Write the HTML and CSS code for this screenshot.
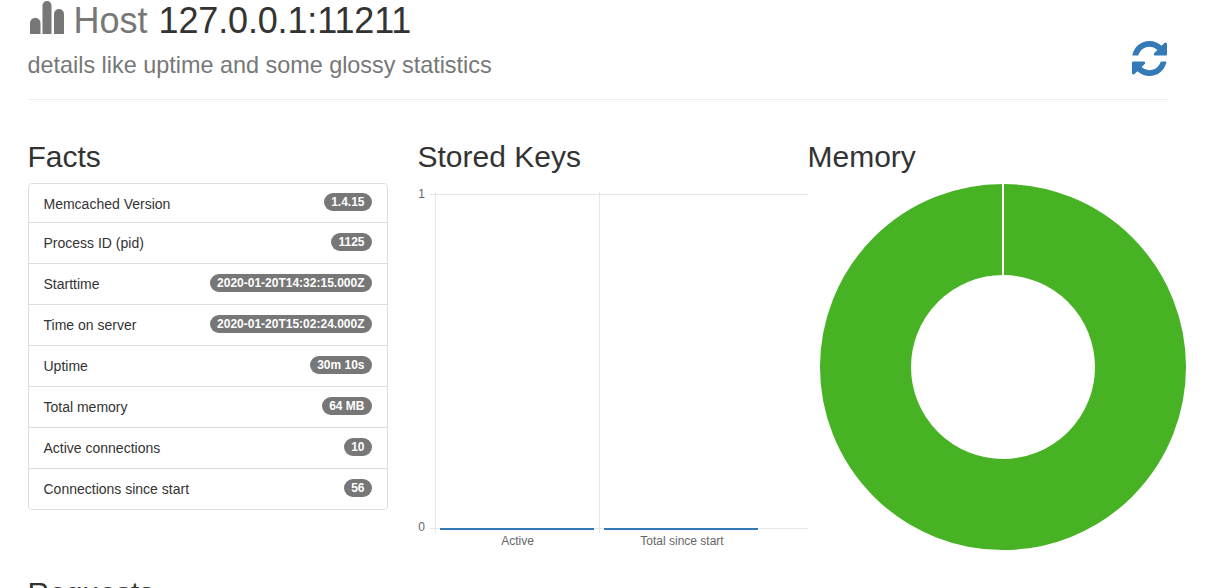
FILE: index.html
```html
<!DOCTYPE html>
<html lang="en">

<head>
    <meta charset="UTF-8">
    <title>Host 127.0.0.1:11211</title>
    <link rel="stylesheet" href="styles.css">
</head>

<body>

    <div class="container">
        <div class="page-header">
            <div>
                <h1>
                    <svg class="stats-icon" viewBox="0 0 34 33" aria-hidden="true">
                        <path d="M0 33V22a5 5 0 0 1 10.5 0V33z"></path>
                        <path d="M12.5 33V4.5a4.5 4.5 0 0 1 9 0V33z"></path>
                        <path d="M24 33V13a5 5 0 0 1 10 0V33z"></path>
                    </svg>
                    <span class="muted">Host</span> <span class="address">127.0.0.1:11211</span>
                </h1>
                <p class="subtitle">details like uptime and some glossy statistics</p>
            </div>
            <a class="refresh" href="#">
                <svg viewBox="128 128 1536 1536" aria-hidden="true">
                    <path d="M1639 1056q0 5-1 7-64 268-268 434.5t-478 166.5q-146 0-282.5-55t-243.5-157l-129 129q-19 19-45 19t-45-19-19-45v-448q0-26 19-45t45-19h448q26 0 45 19t19 45-19 45l-137 137q71 66 161 102t187 36q134 0 250-65t186-179q11-17 53-117 8-23 30-23h192q13 0 22.5 9.5t9.5 22.5zm25-800v448q0 26-19 45t-45 19h-448q-26 0-45-19t-19-45 19-45l138-138q-148-137-349-137-134 0-250 65t-186 179q-11 17-53 117-8 23-30 23h-199q-13 0-22.5-9.5t-9.5-22.5v-7q65-268 270-434.5t480-166.5q146 0 284 55.5t245 156.5l130-129q19-19 45-19t45 19 19 45z"></path>
                </svg>
            </a>
        </div>

        <div class="row">
            <div class="col">
                <h2>Facts</h2>
                <ul class="list-group">
                    <li class="list-item">Memcached Version <span class="badge">1.4.15</span></li>
                    <li class="list-item">Process ID (pid) <span class="badge">1125</span></li>
                    <li class="list-item">Starttime <span class="badge">2020-01-20T14:32:15.000Z</span></li>
                    <li class="list-item">Time on server <span class="badge">2020-01-20T15:02:24.000Z</span></li>
                    <li class="list-item">Uptime <span class="badge">30m 10s</span></li>
                    <li class="list-item">Total memory <span class="badge">64 MB</span></li>
                    <li class="list-item">Active connections <span class="badge">10</span></li>
                    <li class="list-item">Connections since start <span class="badge">56</span></li>
                </ul>
            </div>

            <div class="col">
                <h2>Stored Keys</h2>
                <svg class="bar-chart" width="390" height="366" viewBox="418 184 390 366">
                    <g class="grid">
                        <line x1="430" y1="194.5" x2="808" y2="194.5"></line>
                        <line x1="430" y1="528.5" x2="808" y2="528.5"></line>
                        <line x1="435.5" y1="192" x2="435.5" y2="533"></line>
                        <line x1="599.5" y1="192" x2="599.5" y2="533"></line>
                    </g>
                    <rect class="bar" x="440" y="528" width="154" height="2"></rect>
                    <rect class="bar" x="604" y="528" width="154" height="2"></rect>
                    <text x="425" y="198" text-anchor="end">1</text>
                    <text x="425" y="531" text-anchor="end">0</text>
                    <text x="517.5" y="545" text-anchor="middle">Active</text>
                    <text x="682" y="545" text-anchor="middle">Total since start</text>
                </svg>
            </div>

            <div class="col">
                <h2>Memory</h2>
                <svg class="donut-chart" width="378" height="366" viewBox="808 184 378 366">
                    <circle class="donut" cx="1003" cy="367" r="137.5"></circle>
                    <line class="donut-gap" x1="1003" y1="183" x2="1003" y2="276"></line>
                </svg>
            </div>
        </div>

        <h2 class="requests">Requests</h2>
    </div>

</body>

</html>
```

FILE: styles.css
```css
html,
body {
    height: 100%;
}

body {
    font-family: "Liberation Sans", Arial, sans-serif;
    font-size: 14px;
    line-height: 20px;
    color: #333;
    background-color: #fff;
    margin: 0;
    overflow: hidden;
}

.container {
    padding: 0 52.5px 0 27.5px;
}

.page-header {
    display: flex;
    justify-content: space-between;
    align-items: flex-end;
    height: 99px;
    border-bottom: 1px solid #eee;
}

h1 {
    font-size: 36px;
    font-weight: 500;
    line-height: 40px;
    margin: 1px 0 0;
}

.stats-icon {
    width: 34px;
    height: 33px;
    fill: #777;
    vertical-align: -1px;
    margin-left: 2.5px;
    margin-right: -0.5px;
}

.muted {
    color: #777;
}

.address {
    letter-spacing: -0.15px;
    margin-left: 1px;
}

.subtitle {
    font-size: 23.4px;
    line-height: 26px;
    color: #777;
    margin: 11px 0 21px;
}

.refresh {
    display: block;
    margin-bottom: 23px;
}

.refresh svg {
    display: block;
    width: 35px;
    height: 35px;
    fill: #337ab7;
    margin-right: 0.5px;
}

.row {
    display: grid;
    grid-template-columns: repeat(3, 360px);
    gap: 30px;
    margin-top: 40px;
}

h2 {
    font-size: 30px;
    font-weight: 500;
    line-height: 33px;
    margin: 0 0 10px;
}

.list-group {
    list-style: none;
    margin: 0;
    padding: 0;
    border: 1px solid #ddd;
    border-radius: 4px;
}

.list-item {
    display: flex;
    justify-content: space-between;
    align-items: center;
    height: 40px;
    padding: 0 15px;
    border-bottom: 1px solid #ddd;
}

.list-item:first-child {
    height: 37px;
    padding-top: 1px;
}

.list-item:last-child {
    border-bottom: none;
}

.badge {
    font-size: 12px;
    font-weight: 700;
    line-height: 12px;
    color: #fff;
    background-color: #777;
    padding: 3px 7px;
    border-radius: 10px;
    margin-top: -3px;
}

.bar-chart,
.donut-chart {
    display: block;
    margin-top: 11px;
    overflow: visible;
}

.grid line {
    stroke: #e6e6e6;
    stroke-width: 1;
}

.bar {
    fill: #337ab7;
}

.bar-chart text {
    font-size: 12px;
    fill: #666;
}

.donut {
    fill: none;
    stroke: #46b224;
    stroke-width: 91px;
}

.donut-gap {
    stroke: #fff;
    stroke-width: 2;
}

.requests {
    margin-top: 26px;
}
```
